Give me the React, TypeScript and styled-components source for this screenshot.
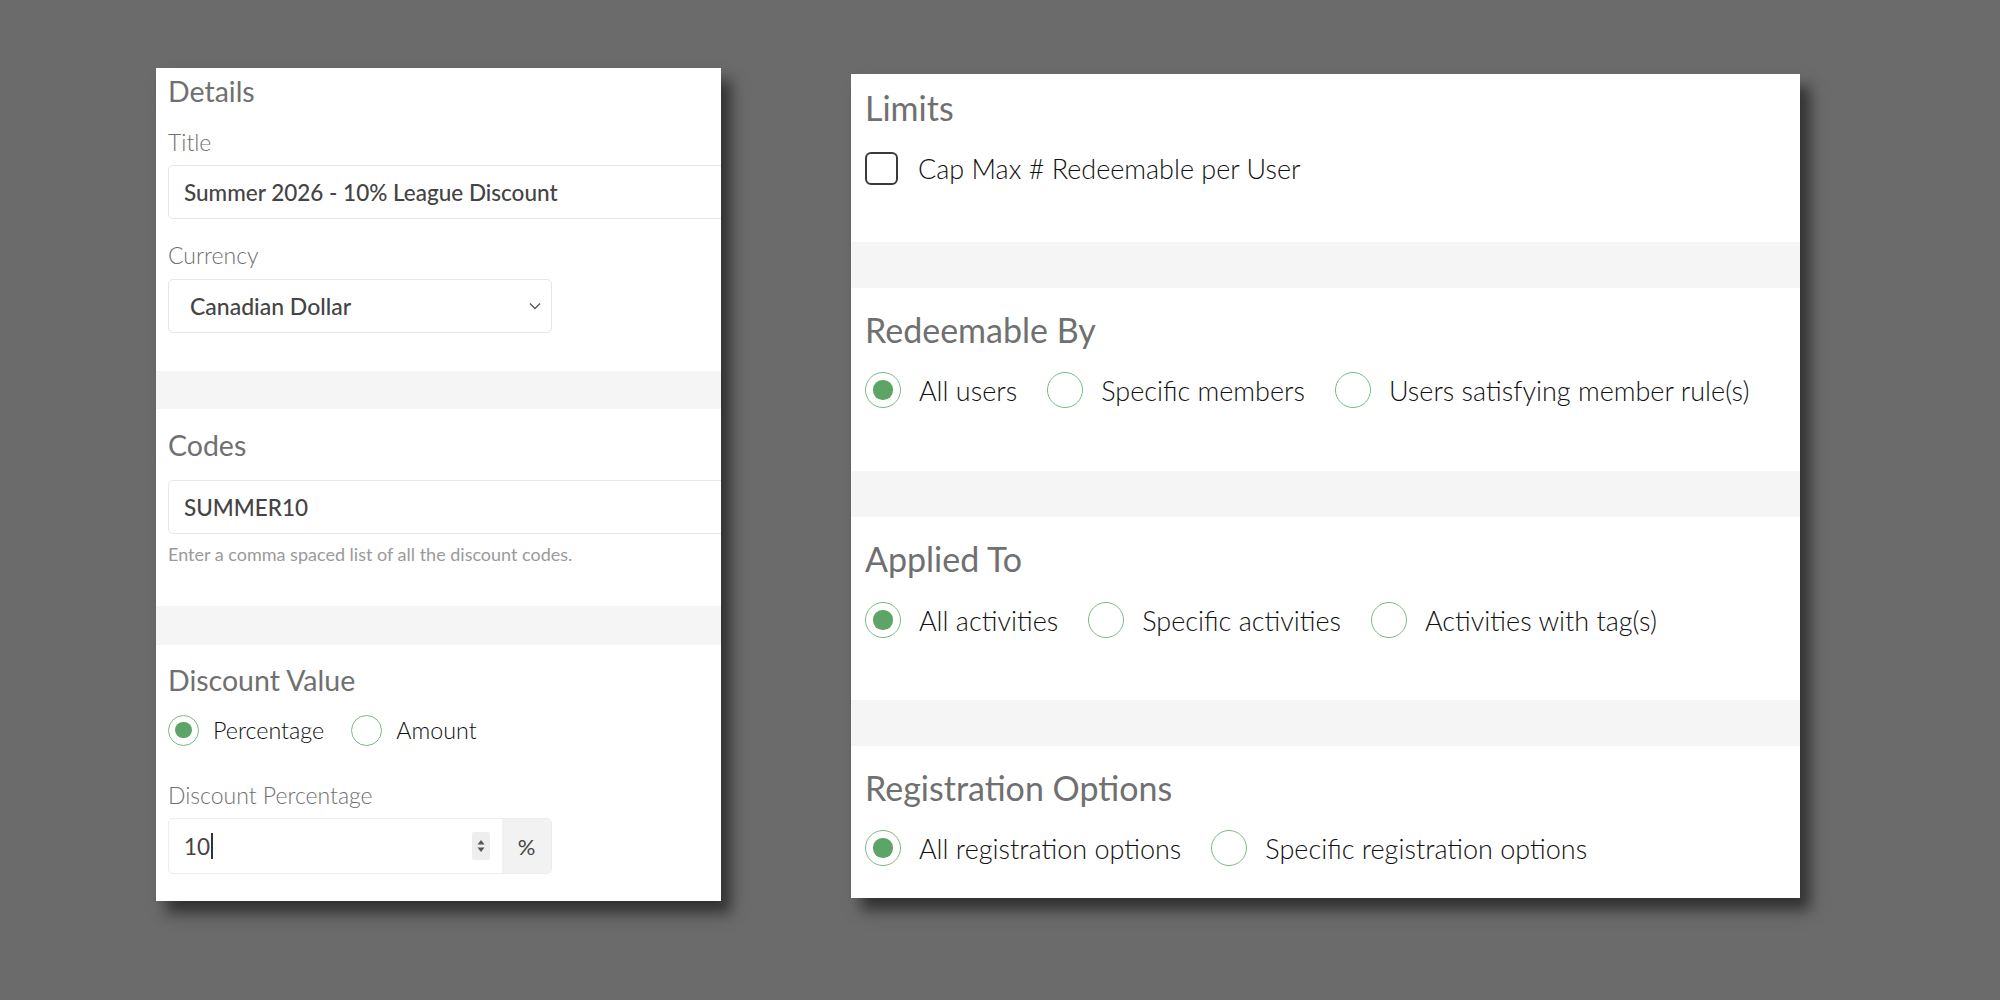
import React from 'react';
import styled, {createGlobalStyle} from 'styled-components';

const GlobalStyle = createGlobalStyle`
  html, body {
    margin: 0;
    padding: 0;
    background: #6b6b6b;
    font-family: Lato, "Open Sans", sans-serif;
  }
`;

const Page = styled.div`
  width: 2000px;
  height: 1000px;
  display: flex;
  align-items: flex-start;
  gap: 130px;
  padding: 68px 0 0 156px;
  box-sizing: border-box;
  overflow: hidden;
`;

const Card = styled.div<{ $width: number; $offset?: number }>`
  width: ${({$width}) => $width}px;
  margin-top: ${({$offset}) => $offset || 0}px;
  background: #fff;
  overflow: hidden;
  box-shadow: 10px 12px 14px rgba(0, 0, 0, 0.55);
`;

const Section = styled.div<{ $pad: string; $inset: number }>`
  padding: ${({$pad}) => $pad};
  padding-left: ${({$inset}) => $inset}px;
`;

const Band = styled.div<{ $h: number }>`
  height: ${({$h}) => $h}px;
  background: #f5f5f5;
`;

const Heading = styled.div<{ $size: number; $lh: number }>`
  font-size: ${({$size}) => $size}px;
  line-height: ${({$lh}) => $lh}px;
  color: #707070;
  font-weight: 400;
`;

const Label = styled.div<{ $mt: number }>`
  margin-top: ${({$mt}) => $mt}px;
  font-size: 23px;
  line-height: 28px;
  font-weight: 300;
  color: #6f6f6f;
`;

const TextBox = styled.div<{ $mt: number; $width: number }>`
  margin-top: ${({$mt}) => $mt}px;
  width: ${({$width}) => $width}px;
  height: 54px;
  box-sizing: border-box;
  border: 1px solid #e6e6e6;
  border-radius: 5px;
  display: flex;
  align-items: center;
  padding-left: 15px;
  font-size: 22.5px;
  font-weight: 500;
  color: #444;
`;

const SelectBox = styled(TextBox)`
  padding: 0 10px 0 21px;
  justify-content: space-between;
  font-size: 23px;
`;

const Help = styled.div`
  margin-top: 9px;
  font-size: 18px;
  line-height: 22px;
  color: #9a9a9a;
`;

const RadioRow = styled.div<{ $mt: number; $gap: number }>`
  margin-top: ${({$mt}) => $mt}px;
  display: flex;
  align-items: center;
  gap: ${({$gap}) => $gap}px;
  height: 36px;
`;

const Choice = styled.label<{ $gap: number; $size: number }>`
  display: flex;
  align-items: center;
  gap: ${({$gap}) => $gap}px;
  font-size: ${({$size}) => $size}px;
  font-weight: 300;
  color: #111;
`;

const Radio = styled.span<{ $on?: boolean; $d: number }>`
  width: ${({$d}) => $d}px;
  height: ${({$d}) => $d}px;
  box-sizing: border-box;
  border-radius: 50%;
  border: 1.5px solid #7cb884;
  display: flex;
  align-items: center;
  justify-content: center;
  flex: none;

  &::after {
    content: "";
    width: 56%;
    height: 56%;
    border-radius: 50%;
    background: ${({$on}) => ($on ? '#5da566' : 'transparent')};
  }
`;

const Check = styled.span`
  width: 33px;
  height: 33px;
  box-sizing: border-box;
  border: 2px solid #3a3a3a;
  border-radius: 6px;
  flex: none;
`;

const Group = styled.div`
  margin-top: 9px;
  width: 384px;
  height: 56px;
  display: flex;
  border-radius: 5px;
  overflow: hidden;
  border: 1px solid #ececec;
  box-sizing: border-box;
`;

const GroupInput = styled.div`
  flex: 1;
  display: flex;
  align-items: center;
  padding: 0 12px 0 15px;
  font-size: 22.5px;
  color: #444;
  box-shadow: 2px 0 4px rgba(0, 0, 0, 0.06);
`;

const Caret = styled.span`
  display: inline-block;
  width: 1.5px;
  height: 26px;
  background: #333;
  margin-left: 1px;
`;

const Spinner = styled.span`
  margin-left: auto;
  width: 18px;
  height: 28px;
  background: #eeeeee;
  border-radius: 2px;
  display: flex;
  align-items: center;
  justify-content: center;
`;

const Addon = styled.div`
  width: 49px;
  background: #f2f2f2;
  display: flex;
  align-items: center;
  justify-content: center;
  font-size: 22px;
  color: #444;
`;

const Chevron = () => (
  <svg width="12" height="8" viewBox="0 0 12 8">
    <polyline points="1,1.5 6,6.5 11,1.5" fill="none" stroke="#555" strokeWidth="1.3"/>
  </svg>
);

const SpinArrows = () => (
  <svg width="10" height="18" viewBox="0 0 10 18">
    <polygon points="5,3 8.5,7.5 1.5,7.5" fill="#555"/>
    <polygon points="5,15 8.5,10.5 1.5,10.5" fill="#555"/>
  </svg>
);

type Opt = { text: string; on?: boolean };

const Options = ({opts, mt, gap, d, size, inner}: { opts: Opt[]; mt: number; gap: number; d: number; size: number; inner: number }) => (
  <RadioRow $mt={mt} $gap={gap}>
    {opts.map((o) => (
      <Choice key={o.text} $gap={inner} $size={size}>
        <Radio $on={o.on} $d={d}/>
        {o.text}
      </Choice>
    ))}
  </RadioRow>
);

const RightSection = ({title, children, pad}: { title: string; children: React.ReactNode; pad: string }) => (
  <Section $pad={pad} $inset={14}>
    <Heading $size={34} $lh={40}>{title}</Heading>
    {children}
  </Section>
);

export default function App() {
  return (
    <>
      <GlobalStyle/>
      <Page>
        <Card $width={565}>
          <Section $pad="5px 0 38px" $inset={12}>
            <Heading $size={28.5} $lh={36}>Details</Heading>
            <Label $mt={19}>Title</Label>
            <TextBox $mt={9} $width={600}>Summer 2026 - 10% League Discount</TextBox>
            <Label $mt={22}>Currency</Label>
            <SelectBox $mt={10} $width={384}>
              Canadian Dollar
              <Chevron/>
            </SelectBox>
          </Section>
          <Band $h={38}/>
          <Section $pad="18px 0 41px" $inset={12}>
            <Heading $size={28.5} $lh={36}>Codes</Heading>
            <TextBox $mt={17} $width={600}>SUMMER10</TextBox>
            <Help>Enter a comma spaced list of all the discount codes.</Help>
          </Section>
          <Band $h={39}/>
          <Section $pad="17px 0 27px" $inset={12}>
            <Heading $size={28.5} $lh={36}>Discount Value</Heading>
            <Options
              mt={14}
              gap={27}
              d={31}
              size={23.3}
              inner={14}
              opts={[{text: 'Percentage', on: true}, {text: 'Amount'}]}
            />
            <Label $mt={33}>Discount Percentage</Label>
            <Group>
              <GroupInput>
                10<Caret/>
                <Spinner><SpinArrows/></Spinner>
              </GroupInput>
              <Addon>%</Addon>
            </Group>
          </Section>
        </Card>

        <Card $width={949} $offset={6}>
          <RightSection title="Limits" pad="14px 0 56px">
            <RadioRow $mt={22} $gap={0}>
              <Choice $gap={20} $size={27}>
                <Check/>
                Cap Max # Redeemable per User
              </Choice>
            </RadioRow>
          </RightSection>
          <Band $h={46}/>
          <RightSection title="Redeemable By" pad="22px 0 63px">
            <Options
              mt={22}
              gap={30}
              d={36}
              size={27}
              inner={18}
              opts={[{text: 'All users', on: true}, {text: 'Specific members'}, {text: 'Users satisfying member rule(s)'}]}
            />
          </RightSection>
          <Band $h={46}/>
          <RightSection title="Applied To" pad="22px 0 62px">
            <Options
              mt={23}
              gap={30}
              d={36}
              size={27}
              inner={18}
              opts={[{text: 'All activities', on: true}, {text: 'Specific activities'}, {text: 'Activities with tag(s)'}]}
            />
          </RightSection>
          <Band $h={46}/>
          <RightSection title="Registration Options" pad="22px 0 32px">
            <Options
              mt={22}
              gap={30}
              d={36}
              size={27}
              inner={18}
              opts={[{text: 'All registration options', on: true}, {text: 'Specific registration options'}]}
            />
          </RightSection>
        </Card>
      </Page>
    </>
  );
}
